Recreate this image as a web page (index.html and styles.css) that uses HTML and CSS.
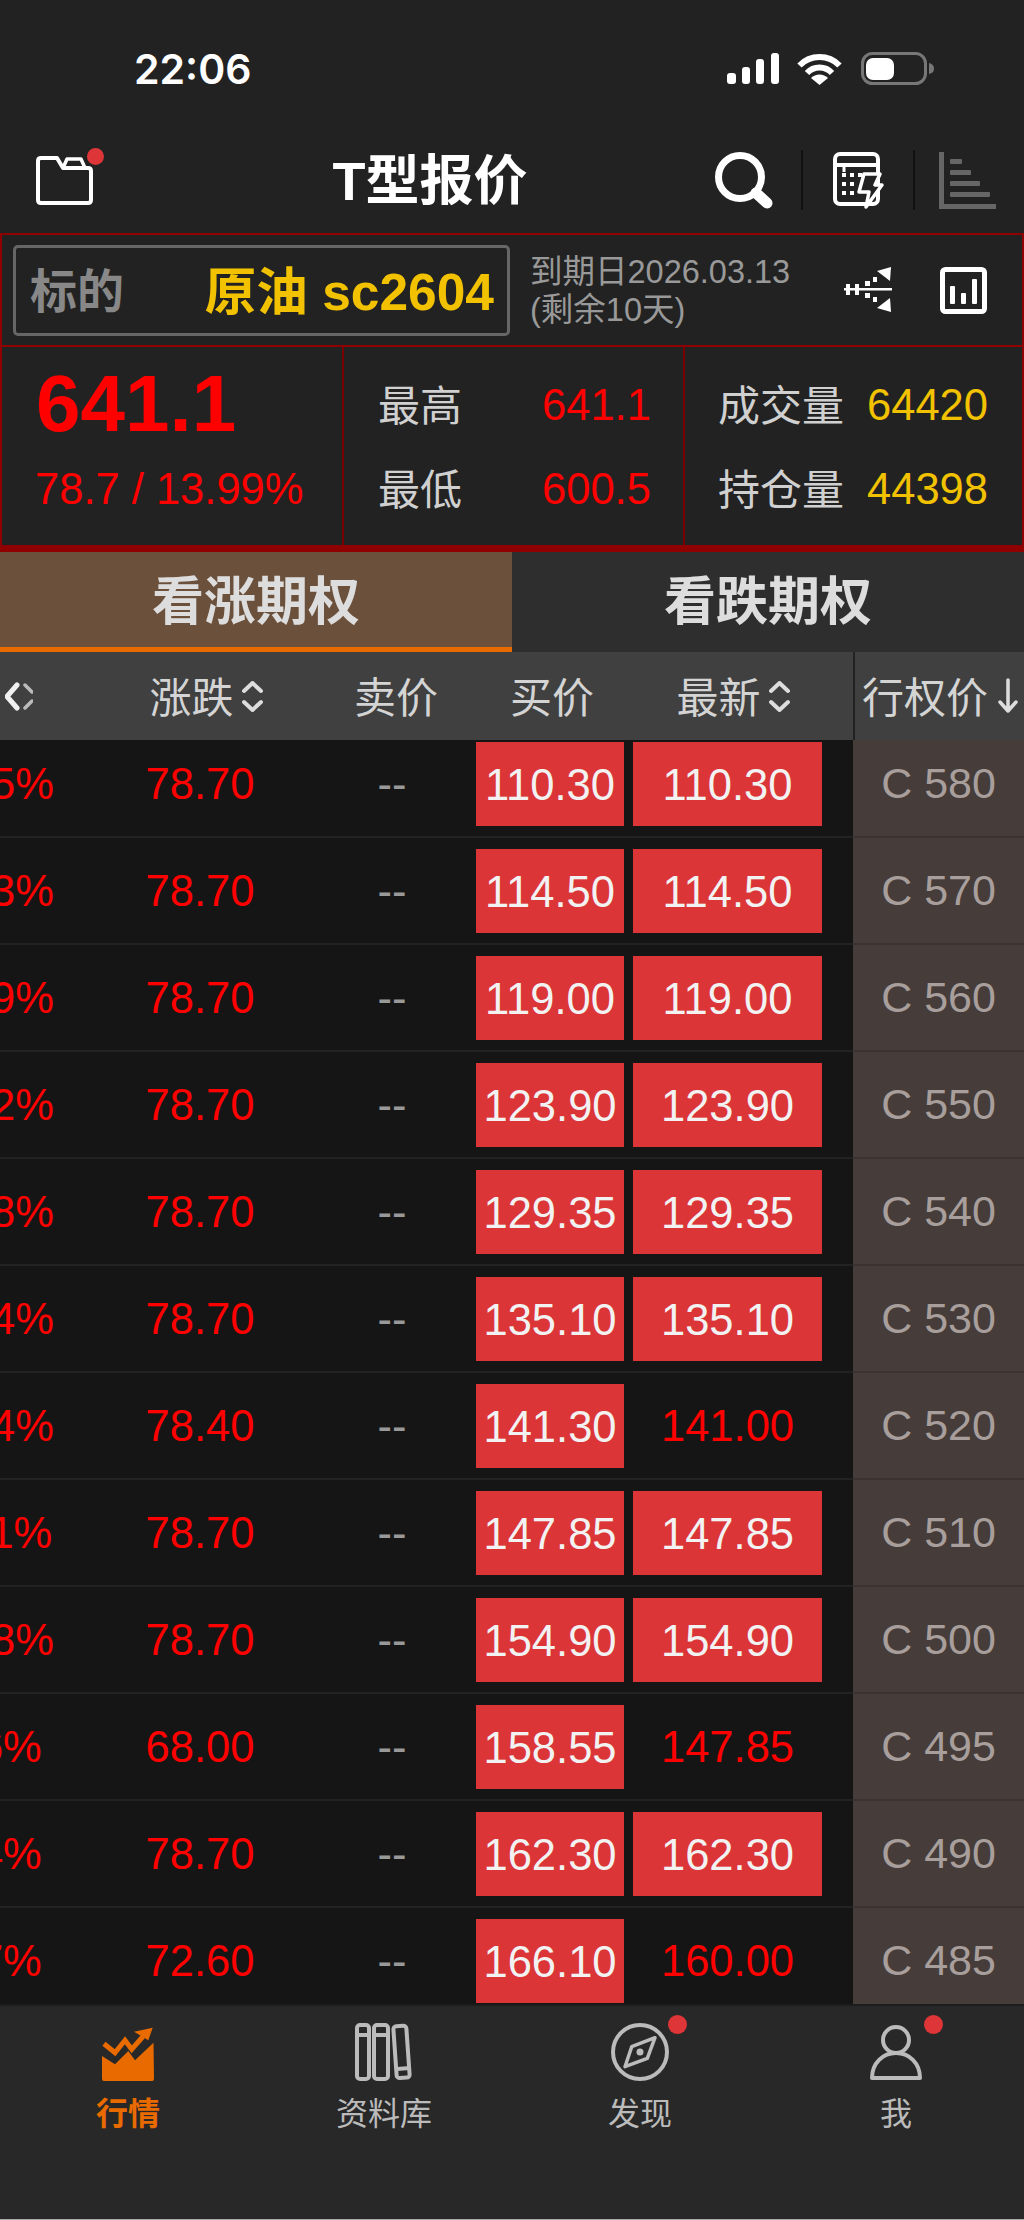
FILE: index.html
```html
<!DOCTYPE html>
<html>
<head>
    <meta charset="UTF-8" />
    <meta name="viewport" content="width=device-width, initial-scale=1.0">
    <title>T型报价</title>
    <link rel="stylesheet" href="styles.css">
</head>

<body>
    <div class="status-bar">
        <div class="status-time">22:06</div>
        <div class="status-icons">
            <svg class="signal" width="52" height="31" viewBox="0 0 52 31" fill="#fff">
                <rect x="0" y="20" width="9" height="11" rx="3" />
                <rect x="15" y="14" width="8" height="17" rx="3" />
                <rect x="29" y="6" width="8" height="25" rx="3" />
                <rect x="44" y="0" width="8" height="31" rx="3" />
            </svg>
            <svg class="wifi" width="45" height="32" viewBox="0 0 45 32" fill="none" stroke="#fff" stroke-width="6">
                <path d="M2.500 12.500A28 28 0 0 1 42.500 12.500" />
                <path d="M10 20A17 17 0 0 1 35 20" />
                <path d="M22.500 32L14 25A12 12 0 0 1 31 25Z" fill="#fff" stroke="none" />
            </svg>
            <svg class="battery" width="73" height="33" viewBox="0 0 73 33">
                <rect x="1.500" y="1.500" width="63" height="30" rx="10" fill="none" stroke="#777" stroke-width="3" />
                <rect x="5" y="6" width="28" height="22" rx="7" fill="#fff" />
                <path d="M68 11Q73 12 73 16.500Q73 21 68 22Z" fill="#777" />
            </svg>
        </div>
    </div>

    <div class="nav-bar">
        <div class="nav-folder">
            <svg width="57" height="50" viewBox="0 0 57 50" fill="none" stroke="#fff" stroke-width="4" stroke-linejoin="round">
                <path d="M5 3H21L27 13H52Q55 13 55 16V45Q55 48 52 48H5Q2 48 2 45V6Q2 3 5 3Z" />
                <path d="M27 13L31 4H45L49 13" stroke-width="3.500" />
            </svg>
            <span class="red-dot folder-dot"></span>
        </div>
        <div class="nav-title">T型报价</div>
        <div class="nav-tools">
            <svg width="58" height="57" viewBox="0 0 58 57" fill="none" stroke="#fff">
                <circle cx="25" cy="25" r="21.500" stroke-width="7" />
                <path d="M41 41L52 51" stroke-width="11" stroke-linecap="round" />
            </svg>
            <span class="tool-sep"></span>
            <svg width="52" height="57" viewBox="0 0 52 57" fill="none" stroke="#fff">
                <rect x="2" y="2" width="43" height="50" rx="5" stroke-width="4" />
                <path d="M2 13H45" stroke-width="4" />
                <path d="M11 13V20" stroke-width="3" />
                <g fill="#fff" stroke="none">
                    <rect x="9" y="21" width="4" height="4" />
                    <rect x="17" y="21" width="4" height="4" />
                    <rect x="25" y="21" width="4" height="4" />
                    <rect x="9" y="30" width="4" height="4" />
                    <rect x="17" y="30" width="4" height="4" />
                    <rect x="9" y="39" width="4" height="4" />
                    <rect x="17" y="39" width="4" height="4" />
                </g>
                <path d="M31 22H47L42 33H49L33 55L36 40H26Z" fill="#222" stroke-width="3.500" stroke-linejoin="round" />
            </svg>
            <span class="tool-sep tool-sep-last"></span>
            <svg width="57" height="57" viewBox="0 0 57 57" fill="#666">
                <rect x="0" y="0" width="5" height="57" />
                <rect x="0" y="52" width="57" height="5" />
                <rect x="11" y="7" width="12" height="5" rx="1" />
                <rect x="11" y="18" width="21" height="5" rx="1" />
                <rect x="11" y="29" width="30" height="5" rx="1" />
                <rect x="11" y="40" width="40" height="5" rx="1" />
            </svg>
        </div>
    </div>

    <div class="quote-panel">
        <div class="quote-top">
            <div class="underlying">
                <span class="underlying-label">标的</span>
                <span class="underlying-name">原油 sc2604</span>
            </div>
            <div class="expiry">到期日2026.03.13<br>(剩余10天)</div>
            <svg class="flow-icon" width="49" height="45" viewBox="0 0 49 45" fill="#fff">
                <rect x="0" y="21" width="48" height="2.500" />
                <rect x="2" y="17" width="4" height="11" />
                <rect x="11" y="17" width="4" height="11" />
                <rect x="21" y="14" width="5" height="5" />
                <rect x="29" y="10" width="4" height="5" />
                <rect x="21" y="26" width="5" height="5" />
                <rect x="29" y="30" width="4" height="5" />
                <path d="M33 4L47 0L46 14Z" />
                <path d="M33 41L47 45L46 31Z" />
            </svg>
            <svg class="chart-icon" width="47" height="47" viewBox="0 0 47 47" fill="#fff">
                <rect x="2.500" y="2.500" width="42" height="42" rx="3" fill="none" stroke="#fff" stroke-width="5" />
                <rect x="10" y="19" width="5" height="18" rx="1" />
                <rect x="21" y="26" width="5" height="11" rx="1" />
                <rect x="32" y="12" width="5" height="25" rx="1" />
            </svg>
        </div>
        <div class="quote-stats">
            <div class="stat-cell stat-main">
                <div class="last-price">641.1</div>
                <div class="last-change">78.7 / 13.99%</div>
            </div>
            <div class="stat-cell stat-range">
                <div class="stat-row"><span class="stat-label">最高</span><span class="red">641.1</span></div>
                <div class="stat-row"><span class="stat-label">最低</span><span class="red">600.5</span></div>
            </div>
            <div class="stat-cell stat-volume">
                <div class="stat-row"><span class="stat-label">成交量</span><span class="gold">64420</span></div>
                <div class="stat-row"><span class="stat-label">持仓量</span><span class="gold">44398</span></div>
            </div>
        </div>
    </div>

    <div class="tabs">
        <div class="tab active">看涨期权</div>
        <div class="tab">看跌期权</div>
    </div>

    <div class="cols table-head">
        <div class="head-pct">
            <span>涨跌幅</span>
            <svg width="28" height="29" viewBox="0 0 28 29" fill="none" stroke-linecap="round">
                <path d="M12 3L2 14.500L12 26" stroke="#f0f0f0" stroke-width="5" stroke-linejoin="round" />
                <path d="M20 3L27 10M27 19L20 26" stroke="#bbb" stroke-width="3.500" />
            </svg>
        </div>
        <div class="head-change">
            <span>涨跌</span>
            <svg width="21" height="31" viewBox="0 0 21 31" fill="none" stroke="#ddd" stroke-width="4" stroke-linecap="round" stroke-linejoin="round">
                <path d="M2 10L10.500 2L19 10M2 21L10.500 29L19 21" />
            </svg>
        </div>
        <div class="head-ask">卖价</div>
        <div class="head-bid">买价</div>
        <div class="head-latest">
            <span>最新</span>
            <svg width="21" height="31" viewBox="0 0 21 31" fill="none" stroke="#ddd" stroke-width="4" stroke-linecap="round" stroke-linejoin="round">
                <path d="M2 10L10.500 2L19 10M2 21L10.500 29L19 21" />
            </svg>
        </div>
        <div class="head-strike">
            <span>行权价</span>
            <svg width="20" height="36" viewBox="0 0 20 36" fill="none" stroke="#ddd" stroke-width="3.500" stroke-linecap="round" stroke-linejoin="round">
                <path d="M10 2V33M2 24L10 33L18 24" />
            </svg>
        </div>
    </div>

    <div class="table-rows">
        <div class="rows-scroll">
            <div class="cols row"><div class="pct">249.05%</div><div class="change">78.70</div><div class="ask">--</div><div class="price-btn">110.30</div><div class="latest price-btn">110.30</div><div class="strike">C 580</div></div>
            <div class="cols row"><div class="pct">219.83%</div><div class="change">78.70</div><div class="ask">--</div><div class="price-btn">114.50</div><div class="latest price-btn">114.50</div><div class="strike">C 570</div></div>
            <div class="cols row"><div class="pct">195.29%</div><div class="change">78.70</div><div class="ask">--</div><div class="price-btn">119.00</div><div class="latest price-btn">119.00</div><div class="strike">C 560</div></div>
            <div class="cols row"><div class="pct">174.12%</div><div class="change">78.70</div><div class="ask">--</div><div class="price-btn">123.90</div><div class="latest price-btn">123.90</div><div class="strike">C 550</div></div>
            <div class="cols row"><div class="pct">155.38%</div><div class="change">78.70</div><div class="ask">--</div><div class="price-btn">129.35</div><div class="latest price-btn">129.35</div><div class="strike">C 540</div></div>
            <div class="cols row"><div class="pct">139.54%</div><div class="change">78.70</div><div class="ask">--</div><div class="price-btn">135.10</div><div class="latest price-btn">135.10</div><div class="strike">C 530</div></div>
            <div class="cols row"><div class="pct">125.24%</div><div class="change">78.40</div><div class="ask">--</div><div class="price-btn">141.30</div><div class="latest">141.00</div><div class="strike">C 520</div></div>
            <div class="cols row"><div class="pct">113.81%</div><div class="change">78.70</div><div class="ask">--</div><div class="price-btn">147.85</div><div class="latest price-btn">147.85</div><div class="strike">C 510</div></div>
            <div class="cols row"><div class="pct">103.28%</div><div class="change">78.70</div><div class="ask">--</div><div class="price-btn">154.90</div><div class="latest price-btn">154.90</div><div class="strike">C 500</div></div>
            <div class="cols row"><div class="pct">85.16%</div><div class="change">68.00</div><div class="ask">--</div><div class="price-btn">158.55</div><div class="latest">147.85</div><div class="strike">C 495</div></div>
            <div class="cols row"><div class="pct">94.14%</div><div class="change">78.70</div><div class="ask">--</div><div class="price-btn">162.30</div><div class="latest price-btn">162.30</div><div class="strike">C 490</div></div>
            <div class="cols row"><div class="pct">83.07%</div><div class="change">72.60</div><div class="ask">--</div><div class="price-btn">166.10</div><div class="latest">160.00</div><div class="strike">C 485</div></div>
        </div>
    </div>

    <div class="tab-bar">
        <div class="tab-item active">
            <svg width="52" height="54" viewBox="0 0 52 54" fill="#e96b00">
                <path d="M2 16.700L13 25.700L23 13.300L29.700 22.300L41 9.500" fill="none" stroke="#e96b00" stroke-width="5" />
                <path d="M32 4.700L50.700 0.700L46.300 13.300Z" />
                <path d="M0 29L13 37.300L26.300 24L33 33.300L51.500 15.700L52 52Q52 54 50 54H2Q0 54 0 52Z" />
            </svg>
            <div class="tab-label">行情</div>
        </div>
        <div class="tab-item">
            <svg width="58" height="58" viewBox="0 0 58 58" fill="none" stroke="#bbb" stroke-width="4">
                <rect x="2" y="2" width="12" height="54" rx="3" />
                <path d="M2 12H14" />
                <rect x="19" y="2" width="14" height="54" rx="3" />
                <path d="M19 12H33" />
                <rect x="40" y="3" width="13" height="52" rx="3" transform="rotate(-4 45 29)" />
                <path d="M42 46L55 45" />
            </svg>
            <div class="tab-label">资料库</div>
        </div>
        <div class="tab-item">
            <svg width="58" height="58" viewBox="0 0 58 58" fill="none" stroke="#bbb" stroke-width="4">
                <circle cx="29" cy="29" r="27" />
                <path d="M44 14.700L36.300 35.300L14 43.700L20.700 23.700Z" stroke-width="3.500" stroke-linejoin="round" />
                <circle cx="29" cy="29" r="3.500" fill="#bbb" stroke="none" />
            </svg>
            <span class="red-dot tab-dot"></span>
            <div class="tab-label">发现</div>
        </div>
        <div class="tab-item">
            <svg width="52" height="56" viewBox="0 0 52 56" fill="none" stroke="#bbb" stroke-width="4" stroke-linejoin="round">
                <circle cx="26" cy="15" r="13" />
                <path d="M2 53C2 38 13 28 26 28C39 28 50 38 50 53Z" />
            </svg>
            <span class="red-dot tab-dot"></span>
            <div class="tab-label">我</div>
        </div>
    </div>
</body>
</html>
```

FILE: styles.css
```css
* {
    margin: 0;
    padding: 0;
    box-sizing: border-box;
    font-family: "Liberation Sans", "Noto Sans CJK SC", sans-serif;
}

html,
body {
    width: 1024px;
    height: 2220px;
    overflow: hidden;
}

body {
    background-color: #222;
    display: flex;
    flex-direction: column;
    color: #ccc;
}

.red {
    color: #f00;
}

.gold {
    color: #f2c200;
}

.red-dot {
    position: absolute;
    border-radius: 50%;
    background-color: #de3538;
}

/* status bar */
.status-bar {
    height: 130px;
    padding: 52px 90px 0 134px;
    display: flex;
    justify-content: space-between;
    align-items: flex-start;
}

.status-time {
    font-family: "Inter", sans-serif;
    font-size: 41px;
    font-weight: 600;
    line-height: 34px;
    color: #fff;
}

.status-icons {
    display: flex;
    align-items: center;
}

.wifi {
    margin: 0 19px 0 18px;
}

/* nav */
.nav-bar {
    height: 103px;
    padding: 0 28px 3px 36px;
    display: flex;
    align-items: center;
}

.nav-folder {
    position: relative;
    display: flex;
}

.folder-dot {
    top: -7px;
    left: 51px;
    width: 17px;
    height: 17px;
}

.nav-title {
    flex: 1;
    padding: 0 0 7px 52px;
    text-align: center;
    font-size: 54px;
    font-weight: 700;
    color: #fff;
}

.nav-tools {
    display: flex;
    align-items: center;
}

.tool-sep {
    width: 2px;
    height: 60px;
    margin: 0 30px 0 28px;
    background-color: #111;
}

.tool-sep-last {
    margin-right: 24px;
}

/* quote panel */
.quote-panel {
    height: 319px;
    border: 2px solid #8f0000;
    border-bottom-width: 7px;
}

.quote-top {
    height: 112px;
    padding: 0 35px 0 11px;
    display: flex;
    align-items: center;
    border-bottom: 2px solid #8f0000;
}

.underlying {
    width: 497px;
    height: 91px;
    padding: 0 13px 5px 14px;
    display: flex;
    align-items: center;
    justify-content: space-between;
    border: 3px solid #666;
    border-radius: 5px;
}

.underlying-label {
    font-size: 47px;
    font-weight: 700;
    color: #888;
}

.underlying-name {
    font-size: 51.500px;
    font-weight: 700;
    color: #f2c200;
}

.expiry {
    margin: 2px 0 0 20px;
    font-size: 32.500px;
    line-height: 38px;
    color: #999;
}

.flow-icon {
    margin: 0 0 2px auto;
}

.chart-icon {
    margin-left: 47px;
}

.quote-stats {
    height: 198px;
    display: grid;
    grid-template-columns: 342px 341px 1fr;
}

.stat-cell {
    display: flex;
    flex-direction: column;
    justify-content: center;
    font-size: 43.500px;
    border-right: 2px solid #7a0000;
}

.stat-cell:last-child {
    border-right: none;
}

.stat-main {
    padding-left: 33px;
}

.last-price {
    height: 84px;
    padding-left: 1px;
    line-height: 84px;
    font-size: 80px;
    font-weight: 700;
    color: #f00;
}

.last-change {
    height: 84px;
    line-height: 86px;
    font-size: 43.500px;
    color: #f00;
}

.stat-range {
    padding-left: 34px;
}

.stat-volume {
    padding-left: 33px;
}

.stat-row {
    height: 84px;
    display: flex;
    align-items: center;
}

.stat-row > span:last-child {
    padding-top: 2px;
}

.stat-label {
    width: 164px;
    padding-bottom: 4px;
    font-size: 42px;
    color: #d0d0d0;
}

.stat-volume .stat-label {
    width: 149px;
}

/* tabs */
.tabs {
    height: 100px;
    display: grid;
    grid-template-columns: 512px 512px;
}

.tab {
    display: flex;
    align-items: center;
    justify-content: center;
    padding-bottom: 4px;
    font-size: 52px;
    font-weight: 700;
    color: #ddd;
    background-color: #2e2e2e;
    border-bottom: 5px solid #2e2e2e;
}

.tab.active {
    background-color: #6b503c;
    border-bottom-color: #e96b00;
}

/* option table */
.cols {
    width: 1188px;
    margin-left: -164px;
    display: grid;
    grid-template-columns: 264px 200px 176px 148px 198px 31px 171px;
    align-items: center;
}

.table-head {
    position: relative;
    z-index: 1;
    height: 88px;
    flex-shrink: 0;
    padding-bottom: 4px;
    background-color: #404040;
    font-size: 42px;
    color: #d4d4d4;
}

.table-head > div {
    display: flex;
    align-items: center;
    justify-content: center;
}

.table-head svg {
    margin-top: 4px;
}

.table-head > .head-pct {
    justify-content: flex-end;
    gap: 8px;
    padding-right: 67px;
}

.table-head > .head-change {
    gap: 8px;
    padding-left: 12px;
}

.table-head > .head-ask {
    padding-left: 16px;
}

.table-head > .head-bid {
    padding-left: 4px;
}

.table-head > .head-latest {
    gap: 8px;
    padding-left: 20px;
}

.table-head > .head-strike {
    grid-column: 7;
    height: 88px;
    margin-bottom: -4px;
    padding: 0 0 4px 7px;
    justify-content: flex-start;
    gap: 10px;
    border-left: 2px solid #222;
    white-space: nowrap;
}

.table-rows {
    height: 1264px;
    overflow: hidden;
    background-color: #151515;
}

.rows-scroll {
    margin-top: -9px;
}

.row {
    height: 107px;
    border-bottom: 2px solid #222;
    font-size: 43.500px;
    text-align: center;
    color: #f00;
}

.ask {
    padding-left: 8px;
    color: #999;
}

.price-btn {
    height: 84px;
    margin-top: -2px;
    line-height: 86px;
    background-color: #db3538;
    color: #f2f2f2;
}

.latest {
    margin-left: 9px;
}

.strike {
    grid-column: 7;
    height: 107px;
    line-height: 105px;
    font-size: 43px;
    background-color: #463d3b;
    color: #a89f9c;
    border-bottom: 2px solid #3a3331;
}

/* bottom tab bar */
.tab-bar {
    height: 216px;
    flex-shrink: 0;
    padding-top: 15px;
    display: grid;
    grid-template-columns: repeat(4, 256px);
    align-content: flex-start;
    background-color: #282828;
    border-top: 2px solid #1c1c1c;
    border-bottom: 1px solid #aaa;
}

.tab-item {
    position: relative;
    height: 108px;
    display: flex;
    flex-direction: column;
    align-items: center;
    justify-content: flex-end;
    font-size: 32px;
    color: #bbb;
}

.tab-item.active {
    color: #e96b00;
    font-weight: 700;
}

.tab-label {
    margin-top: 12px;
    line-height: 36px;
    transform: translateY(3px);
}

.tab-dot {
    top: -6px;
    left: 156px;
    width: 19px;
    height: 19px;
}
```
